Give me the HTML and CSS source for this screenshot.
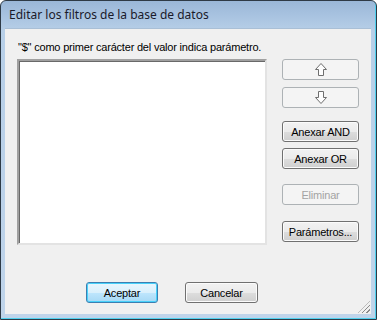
FILE: index.html
```html
<!DOCTYPE html>
<html lang="es">
<head>
  <meta charset="UTF-8" />
  <title>Editar los filtros de la base de datos</title>
  <link rel="stylesheet" href="styles.css">
</head>
<body>
  <div class="window">
    <div class="titlebar">Editar los filtros de la base de datos</div>
    <div class="client">
      <div class="hint">"$" como primer carácter del valor indica parámetro.</div>
      <div class="main">
        <div class="listbox"></div>
        <div class="side">
          <button class="btn disabled up" disabled>
            <svg width="12" height="13" viewBox="0 0 12 13"><path d="M6 0.5 L11.5 6.5 L8.5 6.5 L8.5 12.5 L3.5 12.5 L3.5 6.5 L0.5 6.5 Z" fill="#fdfdfd" stroke="#6e6e6e"/></svg>
          </button>
          <button class="btn disabled down" disabled>
            <svg width="12" height="13" viewBox="0 0 12 13"><path d="M6 12.5 L11.5 6.5 L8.5 6.5 L8.5 0.5 L3.5 0.5 L3.5 6.5 L0.5 6.5 Z" fill="#fdfdfd" stroke="#6e6e6e"/></svg>
          </button>
          <button class="btn and">Anexar AND</button>
          <button class="btn or">Anexar OR</button>
          <button class="btn disabled del" disabled>Eliminar</button>
          <button class="btn params">Parámetros...</button>
        </div>
      </div>
      <div class="actions">
        <button class="btn default">Aceptar</button>
        <button class="btn">Cancelar</button>
      </div>
      <div class="grip"></div>
    </div>
  </div>
</body>
</html>
```

FILE: styles.css
```css
body {
  margin: 0;
  background: #fff;
  font-family: "Liberation Sans", Arial, sans-serif;
  font-size: 11px;
  letter-spacing: -0.2px;
  color: #000;
}
.window {
  width: 377px;
  height: 320px;
  box-sizing: border-box;
  border: 1px solid #2e3a46;
  border-radius: 6px 6px 0 0;
  background: linear-gradient(to bottom, #9ab7d8 0, #b7cfe8 30px, #bfd4ea 100%);
  box-shadow: inset -1px -1px 0 #4fd0ee;
  padding: 0 5px 5px 4px;
  display: flex;
  flex-direction: column;
}
.titlebar {
  height: 27px;
  line-height: 27px;
  padding-left: 4px;
  font-family: "Noto Sans", "Open Sans", sans-serif;
  font-size: 12px;
  letter-spacing: 0;
  color: #1a1a2a;
}
.client {
  position: relative;
  flex: 1;
  background: #f0f0f0;
  border-top: 1px solid #a9bfd6;
  padding: 8px 0 0 12px;
}
.hint {
  height: 22px;
  line-height: 20px;
  padding-left: 1px;
}
.main {
  display: flex;
  gap: 15px;
}
.listbox {
  width: 250px;
  height: 186px;
  box-sizing: border-box;
  background: #fff;
  border: 2px solid;
  border-color: #a0a0a0 #e3e3e3 #e3e3e3 #a0a0a0;
  box-shadow: inset 1px 1px 0 #696969;
}
.side {
  display: flex;
  flex-direction: column;
  width: 77px;
}
.btn {
  width: 77px;
  height: 21px;
  padding: 0;
  font-family: "Liberation Sans", Arial, sans-serif;
  font-size: 11px;
  letter-spacing: -0.2px;
  color: #000;
  border: 1px solid #707070;
  border-radius: 3px;
  background: linear-gradient(to bottom, #f2f2f2 0, #ebebeb 50%, #dddddd 51%, #cfcfcf 100%);
  box-shadow: inset 0 0 0 1px #fbfbfb;
  display: flex;
  align-items: center;
  justify-content: center;
}
.btn.disabled {
  border-color: #adb2b5;
  background: #f4f4f4;
  color: #a3a3a3;
  box-shadow: none;
}
.down { margin-top: 7px; }
.and { margin-top: 13px; }
.or { margin-top: 6px; }
.del { margin-top: 15px; }
.params { margin-top: 16px; }
.actions {
  display: flex;
  gap: 27px;
  margin-top: 37px;
  padding-left: 69px;
}
.actions .btn {
  width: 73px;
}
.btn.default {
  width: 72px;
  border-color: #3c7fb1;
  background: linear-gradient(to bottom, #eaf6fd 0, #d9f0fc 50%, #bee6fd 51%, #a7d9f5 100%);
  box-shadow: inset 0 0 0 1px #48d1fa;
}
.grip {
  position: absolute;
  right: 1px;
  bottom: 1px;
  width: 12px;
  height: 12px;
  background: repeating-linear-gradient(135deg, transparent 0, transparent 2px, #8a8a8a 2px, #8a8a8a 3px);
  clip-path: polygon(100% 0, 100% 100%, 0 100%);
}
```
